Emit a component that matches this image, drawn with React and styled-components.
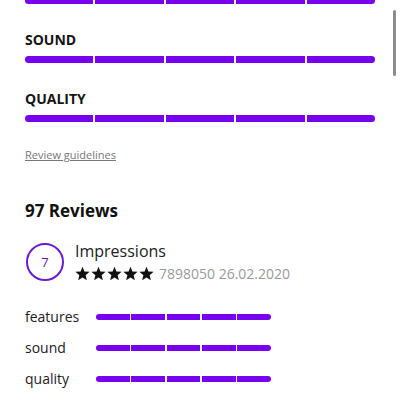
import React from 'react';
import styled, {createGlobalStyle} from 'styled-components';

const GlobalStyle = createGlobalStyle`
  html, body {
    margin: 0;
    padding: 0;
    background: #fff;
    overflow: hidden;
  }
  body {
    font-family: 'Open Sans', 'Noto Sans', sans-serif;
    color: #111;
  }
`;

const PURPLE = '#7700ee';

const Page = styled.div`
  position: relative;
  width: 400px;
  height: 400px;
  overflow: hidden;
`;

const Content = styled.div`
  display: flex;
  flex-direction: column;
  padding: 0 25px;
  margin-top: -3px;
`;

const ScrollThumb = styled.div`
  position: absolute;
  top: 10px;
  right: 4px;
  width: 3px;
  height: 66px;
  border-radius: 2px;
  background: #8c8c8c;
`;

const Bar = styled.div`
  display: flex;
  gap: ${p => p.$gap}px;
  width: ${p => p.$width}px;
  height: ${p => p.$height}px;
  flex-shrink: 0;
`;

const Segment = styled.div`
  flex: 1;
  background: ${PURPLE};
  &:first-child {
    border-radius: ${p => p.$height / 2}px 0 0 ${p => p.$height / 2}px;
  }
  &:last-child {
    border-radius: 0 ${p => p.$height / 2}px ${p => p.$height / 2}px 0;
  }
`;

const Section = styled.div`
  display: flex;
  flex-direction: column;
  gap: 7px;
  margin-top: 26px;
`;

const SectionTitle = styled.div`
  font-size: 14px;
  font-weight: 700;
  line-height: 19px;
  color: #151515;
`;

const GuideLink = styled.a`
  margin-top: 25px;
  font-size: 11px;
  line-height: 15px;
  color: #777;
  text-decoration: underline;
  text-underline-offset: 1px;
  align-self: flex-start;
`;

const ReviewsTitle = styled.h2`
  margin: 37px 0 0;
  font-size: 17px;
  font-weight: 700;
  line-height: 24px;
  color: #111;
`;

const ReviewRow = styled.div`
  display: flex;
  align-items: center;
  gap: 11px;
  margin-top: 18px;
`;

const Score = styled.div`
  width: 34px;
  height: 34px;
  margin-left: 1px;
  border: 2px solid #6a1bd8;
  border-radius: 50%;
  display: flex;
  align-items: center;
  justify-content: center;
  font-size: 13px;
  color: #5a1bc0;
`;

const ReviewInfo = styled.div`
  display: flex;
  flex-direction: column;
`;

const ReviewTitle = styled.div`
  font-size: 16px;
  line-height: 21px;
  color: #222;
`;

const MetaLine = styled.div`
  display: flex;
  align-items: center;
  gap: 5px;
  margin-top: 2px;
  font-size: 14px;
  line-height: 19px;
  color: #9a9a9a;
`;

const Stars = styled.div`
  display: flex;
  gap: 1px;
`;

const Ratings = styled.div`
  display: flex;
  flex-direction: column;
  gap: 12px;
  margin-top: 24px;
`;

const RatingRow = styled.div`
  display: flex;
  align-items: center;
`;

const RatingLabel = styled.div`
  width: 71px;
  font-size: 14px;
  line-height: 19px;
  color: #222;
`;

const SegmentBar = ({width, height = 7, gap = 2, count = 5}) => (
  <Bar $width={width} $height={height} $gap={gap}>
    {Array.from({length: count}).map((_, i) => (
      <Segment key={i} $height={height} />
    ))}
  </Bar>
);

const Star = () => (
  <svg width="15" height="15" viewBox="0 0 24 24">
    <polygon
      fill="#111"
      points="12,1 15.1,8.6 23.3,9.3 17,14.6 19,22.7 12,18.3 5,22.7 7,14.6 0.7,9.3 8.9,8.6"
    />
  </svg>
);

const App = () => {
  const ratings = ['features', 'sound', 'quality'];

  return (
    <Page>
      <GlobalStyle />
      <Content>
        <SegmentBar width={350} />

        <Section>
          <SectionTitle>SOUND</SectionTitle>
          <SegmentBar width={350} />
        </Section>

        <Section>
          <SectionTitle>QUALITY</SectionTitle>
          <SegmentBar width={350} />
        </Section>

        <GuideLink>Review guidelines</GuideLink>

        <ReviewsTitle>97 Reviews</ReviewsTitle>

        <ReviewRow>
          <Score>7</Score>
          <ReviewInfo>
            <ReviewTitle>Impressions</ReviewTitle>
            <MetaLine>
              <Stars>
                {[0, 1, 2, 3, 4].map(i => <Star key={i} />)}
              </Stars>
              <span>7898050 26.02.2020</span>
            </MetaLine>
          </ReviewInfo>
        </ReviewRow>

        <Ratings>
          {ratings.map(r => (
            <RatingRow key={r}>
              <RatingLabel>{r}</RatingLabel>
              <SegmentBar width={175} height={6} gap={1.5} />
            </RatingRow>
          ))}
        </Ratings>
      </Content>
      <ScrollThumb />
    </Page>
  );
};

export default App;
